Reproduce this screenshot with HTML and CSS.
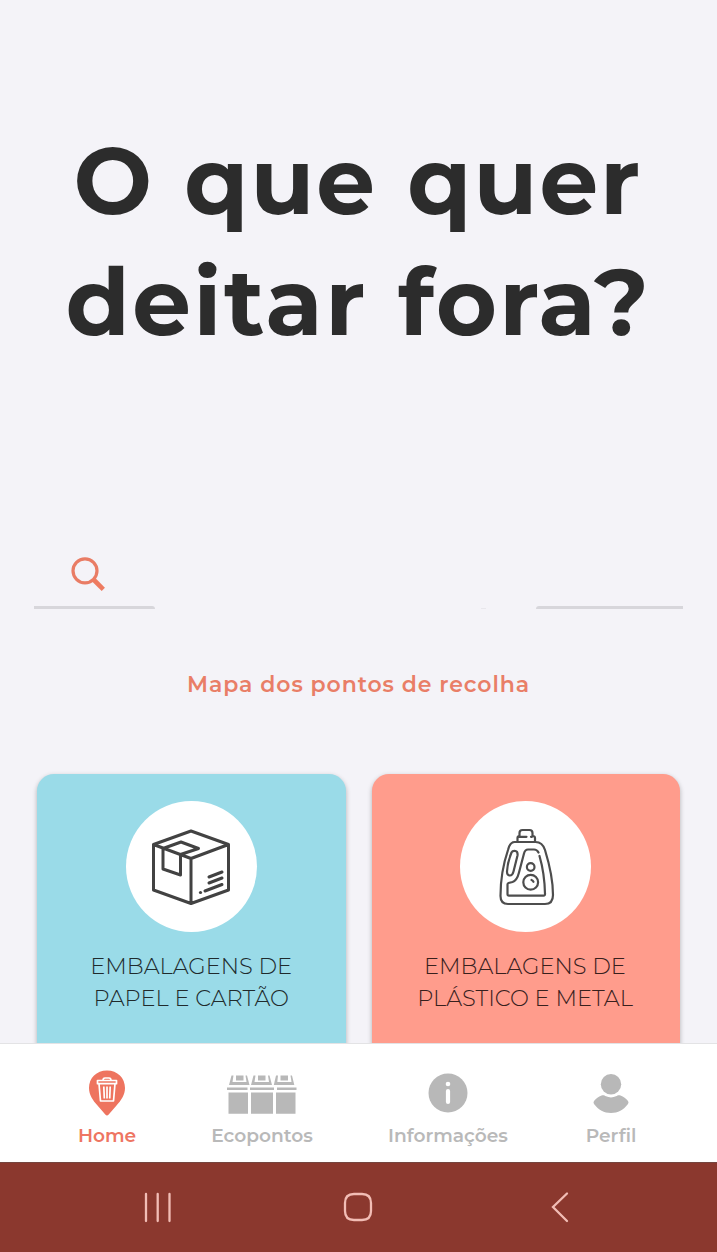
FILE: index.html
```html
<!DOCTYPE html>
<html lang="pt">
<head>
<meta charset="utf-8">
<title>O que quer deitar fora?</title>
<link rel="stylesheet" href="styles.css">
</head>
<body>
<main class="content">
  <h1 class="title"><span class="t1">O que quer</span><span class="t2">deitar fora?</span></h1>
  <div class="search">
    <svg class="search-icon" width="36" height="37" viewBox="0 0 36 37"><circle cx="15" cy="15.800" r="12" fill="none" stroke="#e97c65" stroke-width="3.200"/><path d="M23 24l10.300 10.300" stroke="#ee7b61" stroke-width="4.600"/></svg>
    <div class="lines"><i class="line left"></i><i class="speck"></i><i class="line right"></i></div>
  </div>
  <a class="map-link"><span>Mapa dos pontos de recolha</span></a>
  <section class="cards">
    <article class="card blue">
      <div class="disc">
        <svg width="131" height="131" viewBox="0 0 131 131" fill="none" stroke="#424242" stroke-width="3" stroke-linejoin="round" stroke-linecap="round"><path d="M27.500 43.500L65 30l37.500 13.500v45.500L65 102.500L27.500 89zM27.500 43.500L65 57.500l37.500-14M65 57.500v45M37 47.500v20.500l17.500 6V53.500M37 47.500l18-6.500 17.500 6.500-18 6M83 76l13-5M83 82l13-5M79 90l17-6.500"/><circle cx="74.500" cy="91.500" r="1.600" fill="#424242" stroke="none"/></svg>
      </div>
      <p><span>EMBALAGENS DE</span><span>PAPEL E CARTÃO</span></p>
    </article>
    <article class="card coral">
      <div class="disc">
        <svg width="131" height="131" viewBox="0 0 131 131" fill="none" stroke="#4d4d4d" stroke-width="2.200" stroke-linejoin="round" stroke-linecap="round"><path d="M57.500 40v-3q0-2 2-2v-3q0-3 3-3h7q3 0 3 3v3q2.500 0 2.500 2v3M59.500 35.800h7M71 35.800h1"/><path d="M54.500 41h21q7 0 9.500 8 8 26 8 45 0 9-8 9h-37q-7.500 0-7.500-8 0-24 7.500-46 2-8 6.500-8z"/><path d="M51.500 51.500q-4 10-4.500 19 0 4 3 4 2.500 0 3.500-4l4-16q.5-4-2-4.500-3-.5-4 1.500z"/><path d="M78.500 51.500q-1.500-3-4.500-3h-6q-3 0-4 4l-5 19q-2 8-6.500 9.500l-4 1q-1 .3-1 1.500V93q0 1.700 1.500 1.700h34.500q1.700 0 1.500-2-.5-20.700-5.500-37.700"/><circle cx="70.700" cy="66" r="3.800"/><circle cx="70.700" cy="81.300" r="7.400"/><path d="M71.500 79q1.500.5 2 1.800"/></svg>
      </div>
      <p><span>EMBALAGENS DE</span><span>PLÁSTICO E METAL</span></p>
    </article>
  </section>
</main>
<nav class="tabs">
  <a class="tab home active">
    <svg width="38" height="48" viewBox="0 0 38 48"><path d="M19 1.500C8.500 1.500 1 9 1 19c0 7 4 12.500 8.500 17.500l7.800 9q1.700 1.800 3.400 0l7.800-9C33 31.500 37 26 37 19 37 9 29.500 1.500 19 1.500z" fill="#ee745f"/><g fill="none" stroke="#fff" stroke-width="1.700" stroke-linejoin="round"><path d="M9.500 11.500h19v3.200h-19zM15 11.500q0-2.500 2-2.500h4q2 0 2 2.500M11 14.700l1.500 17.300h13L27 14.700M15.800 17.500l.5 12M19 17.500v12M22.200 17.500l-.5 12"/></g></svg>
    <span>Home</span>
  </a>
  <a class="tab eco">
    <svg width="70" height="48" viewBox="0 0 70 48" fill="#b8b8b8"><path d="M4.500 6.500L2 16h20.500L20 6.500h-1.500L19.500 13h-14L6.500 6.500zM9 6.500h7.500v5H9zM26.500 6.500L24 16h21L42.500 6.500H41l1 6.500H27.500l1-6.500zM31 6.500h7.500v5H31zM49 6.500L46.800 16h20.500L65 6.500h-1.500l1 6.500H50.300l.7-6.500zM53.500 6.500H61v5h-7.500zM0 18.500h20.500V21H0zM23 18.500h24V21H23zM50 18.500h19.500V21H50zM1.500 23.500H21v21.200H1.500zM24 23.500h22v21.200H24zM49 23.500h19.500v21.200H49z"/></svg>
    <span>Ecopontos</span>
  </a>
  <a class="tab info">
    <svg width="40" height="48" viewBox="0 0 40 48"><circle cx="20" cy="24" r="19.500" fill="#b8b8b8"/><circle cx="20" cy="15" r="2.300" fill="#fff"/><path d="M20 22v11" stroke="#fff" stroke-width="4.200" stroke-linecap="round"/></svg>
    <span>Informações</span>
  </a>
  <a class="tab perfil">
    <svg width="36" height="48" viewBox="0 0 36 48" fill="#b8b8b8"><circle cx="18" cy="15.300" r="10.200"/><path d="M8.500 26.500c-3 1.200-5.500 3-7.500 5.500q-1 1.500 0 3C5.500 41 11 44 18 44s12.500-3 17-9q1-1.500 0-3c-2-2.500-4.500-4.300-7.500-5.500-2-.8-3 0-4.500.8-3 1.500-7 1.500-10 0-1.500-.8-2.500-1.600-4.500-.8z"/></svg>
    <span>Perfil</span>
  </a>
</nav>
<footer class="system">
  <svg width="30" height="32" viewBox="0 0 30 32"><path d="M3 3v27M14.700 3v27M26.500 3v27" stroke="#f2bdb5" stroke-width="2.300" stroke-linecap="round"/></svg>
  <svg class="home-key" width="32" height="32" viewBox="0 0 32 32"><path d="M12 3h8q9 0 9 9v8q0 9-9 9h-8q-9 0-9-9v-8Q3 3 12 3z" fill="none" stroke="#f2bdb5" stroke-width="2.300"/></svg>
  <svg width="20" height="32" viewBox="0 0 20 32"><path d="M17 2.500L3 16l14 14" fill="none" stroke="#f2bdb5" stroke-width="2.300" stroke-linecap="round"/></svg>
</footer>
</body>
</html>
```
FILE: styles.css
```css
* { box-sizing: border-box; }
body {
  margin: 0;
  width: 717px;
  height: 1252px;
  display: flex;
  flex-direction: column;
  overflow: hidden;
  background: #f4f3f8;
  font-family: Montserrat, Inter, "Open Sans", sans-serif;
}
.content { height: 1043px; overflow: hidden; }
.title {
  margin: 0;
  padding: 120px 0 0 68px;
  height: 555px;
  font-size: 93px;
  line-height: 121px;
  font-weight: 700;
  color: #2c2c2c;
}
.title span { display: block; width: max-content; white-space: nowrap; }
.t1 { margin-left: 5.500px; letter-spacing: 2px; word-spacing: 2px; }
.t2 { margin-left: -2.500px; letter-spacing: 2.500px; word-spacing: 1.500px; }
.search { height: 55px; padding: 0 34px; display: flex; flex-direction: column; }
.search-icon { margin-left: 36px; flex: none; }
.lines { display: flex; margin-top: 14px; }
.line { height: 3px; background: #d7d6db; }
.left { width: 121px; border-radius: 0 3px 0 0; }
.speck { width: 5px; height: 1px; margin: 2px 50px 0 326px; background: #e8e7ec; }
.right { width: 148px; border-radius: 3px 0 0 0; }
.map-link {
  display: flex;
  justify-content: center;
  margin-top: 60px;
  height: 103.500px;
  line-height: 29px;
  font-size: 22px;
  font-weight: 600;
  letter-spacing: .9px;
  color: #e97e67;
}
.cards { display: grid; grid-template-columns: 309.500px 308px; column-gap: 26px; padding-left: 36.500px; }
.card {
  height: 310px;
  padding-top: 27.500px;
  border-radius: 17px;
  display: flex;
  flex-direction: column;
  align-items: center;
  box-shadow: 0 2px 5px rgba(0, 0, 0, .28);
}
.blue { background: #9adbe8; }
.coral { background: #ff9c8c; padding-right: 2px; }
.disc { width: 131px; height: 131px; border-radius: 50%; background: #fff; }
.disc svg { display: block; }
.card p {
  margin: 18px 0 0;
  display: flex;
  flex-direction: column;
  align-items: center;
  font-size: 22.500px;
  line-height: 32px;
  font-weight: 300;
  color: #202a2c;
}
.coral p { color: #38201d; }
.card p span { white-space: nowrap; }
.tabs {
  height: 119px;
  flex: none;
  border-top: 1px solid #e3e3e5;
  background: #fff;
  display: flex;
  padding-left: 57px;
}
.tab {
  display: flex;
  flex-direction: column;
  align-items: center;
  padding-top: 25px;
  font-size: 18.600px;
  line-height: 26px;
  font-weight: 600;
  color: #b9b9b9;
}
.tab span { margin-top: 6px; white-space: nowrap; }
.active { color: #ee7562; }
.home { width: 100px; }
.eco { width: 210px; }
.info { width: 162px; }
.perfil { width: 164px; }
.system {
  height: 90px;
  flex: none;
  border-top: 1px solid #75453f;
  background: #8b382e;
  display: flex;
  padding: 28px 0 0 143px;
}
.home-key { margin: 0 175.500px 0 169px; }
```
